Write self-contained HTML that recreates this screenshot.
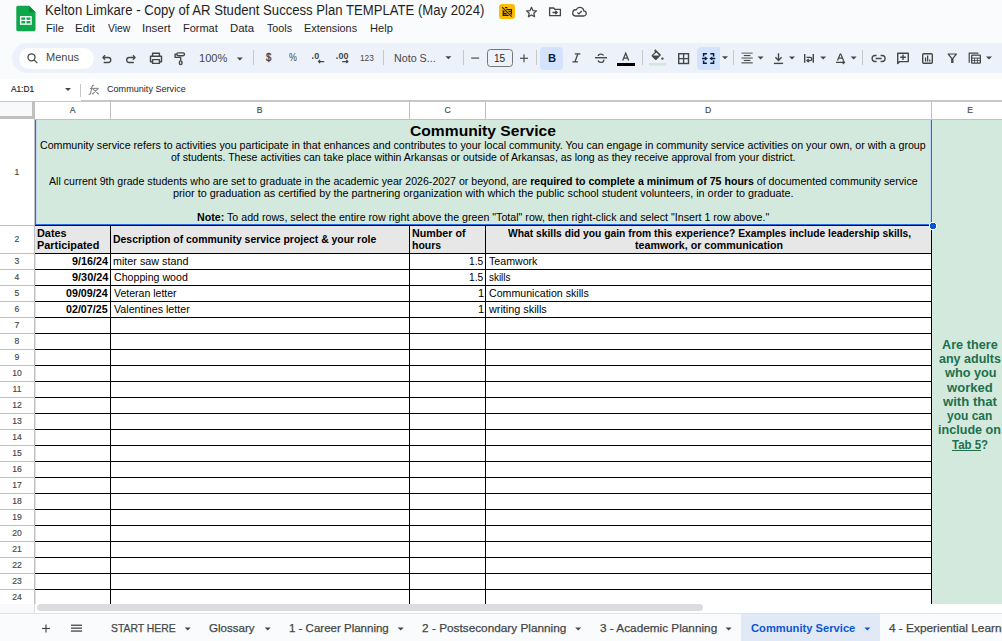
<!DOCTYPE html>
<html><head><meta charset="utf-8"><style>
html,body{margin:0;padding:0}
body{width:1002px;height:641px;overflow:hidden;position:relative;background:#f9fbfd;font-family:"Liberation Sans",sans-serif}
.t{position:absolute;white-space:nowrap;transform-origin:0 0}
.h{position:absolute;text-align:center;font-size:8.6px;line-height:8.6px;color:#444746;white-space:nowrap;-webkit-text-stroke:0.15px #444746}
svg{position:absolute;left:0;top:0}
</style></head><body>
<svg width="1002" height="641" viewBox="0 0 1002 641" shape-rendering="auto">
<rect x="12" y="43" width="1100" height="30" rx="15" fill="#edf2fa"/>
<rect x="19" y="48" width="75" height="21" rx="10.5" fill="#ffffff"/>
<g shape-rendering="crispEdges">
<rect x="0" y="79" width="1002" height="22" fill="#ffffff" />
<rect x="0" y="101" width="81" height="1" fill="#c7c7c7" />
<rect x="81" y="100" width="921" height="2" fill="#c7c7c7" />
<rect x="80" y="84" width="1" height="13" fill="#c7c7c7" />
<rect x="0" y="102" width="1002" height="17" fill="#ffffff" />
<rect x="0" y="102" width="32" height="14" fill="#f8f9fa" />
<rect x="32" y="102" width="3" height="17" fill="#c0c0c0" />
<rect x="0" y="116" width="35" height="3" fill="#c0c0c0" />
<rect x="35" y="119" width="967" height="1" fill="#c0c0c0" />
<rect x="110" y="102" width="1" height="17" fill="#c0c0c0" />
<rect x="409" y="102" width="1" height="17" fill="#c0c0c0" />
<rect x="485" y="102" width="1" height="17" fill="#c0c0c0" />
<rect x="931" y="102" width="1" height="17" fill="#c0c0c0" />
<rect x="0" y="119" width="34" height="485" fill="#ffffff" />
<rect x="34" y="119" width="1" height="485" fill="#c0c0c0" />
<rect x="0" y="225" width="34" height="1" fill="#c0c0c0" />
<rect x="0" y="253" width="34" height="1" fill="#c0c0c0" />
<rect x="0" y="269" width="34" height="1" fill="#c0c0c0" />
<rect x="0" y="285" width="34" height="1" fill="#c0c0c0" />
<rect x="0" y="301" width="34" height="1" fill="#c0c0c0" />
<rect x="0" y="317" width="34" height="1" fill="#c0c0c0" />
<rect x="0" y="333" width="34" height="1" fill="#c0c0c0" />
<rect x="0" y="349" width="34" height="1" fill="#c0c0c0" />
<rect x="0" y="365" width="34" height="1" fill="#c0c0c0" />
<rect x="0" y="381" width="34" height="1" fill="#c0c0c0" />
<rect x="0" y="397" width="34" height="1" fill="#c0c0c0" />
<rect x="0" y="413" width="34" height="1" fill="#c0c0c0" />
<rect x="0" y="429" width="34" height="1" fill="#c0c0c0" />
<rect x="0" y="445" width="34" height="1" fill="#c0c0c0" />
<rect x="0" y="461" width="34" height="1" fill="#c0c0c0" />
<rect x="0" y="477" width="34" height="1" fill="#c0c0c0" />
<rect x="0" y="493" width="34" height="1" fill="#c0c0c0" />
<rect x="0" y="509" width="34" height="1" fill="#c0c0c0" />
<rect x="0" y="525" width="34" height="1" fill="#c0c0c0" />
<rect x="0" y="541" width="34" height="1" fill="#c0c0c0" />
<rect x="0" y="557" width="34" height="1" fill="#c0c0c0" />
<rect x="0" y="573" width="34" height="1" fill="#c0c0c0" />
<rect x="0" y="589" width="34" height="1" fill="#c0c0c0" />
<rect x="35" y="120" width="967" height="484" fill="#ffffff" />
<rect x="35" y="120" width="896" height="105" fill="#d3e9de" />
<rect x="931" y="120" width="71" height="484" fill="#d3e9de" />
<rect x="35" y="226" width="896" height="27" fill="#e7e7e7" />
<rect x="35" y="226" width="1" height="378" fill="#e2e2e2" />
<rect x="35" y="225" width="897" height="1" fill="#000" />
<rect x="35" y="253" width="897" height="1" fill="#000" />
<rect x="35" y="269" width="897" height="1" fill="#000" />
<rect x="35" y="285" width="897" height="1" fill="#000" />
<rect x="35" y="301" width="897" height="1" fill="#000" />
<rect x="35" y="317" width="897" height="1" fill="#000" />
<rect x="35" y="333" width="897" height="1" fill="#000" />
<rect x="35" y="349" width="897" height="1" fill="#000" />
<rect x="35" y="365" width="897" height="1" fill="#000" />
<rect x="35" y="381" width="897" height="1" fill="#000" />
<rect x="35" y="397" width="897" height="1" fill="#000" />
<rect x="35" y="413" width="897" height="1" fill="#000" />
<rect x="35" y="429" width="897" height="1" fill="#000" />
<rect x="35" y="445" width="897" height="1" fill="#000" />
<rect x="35" y="461" width="897" height="1" fill="#000" />
<rect x="35" y="477" width="897" height="1" fill="#000" />
<rect x="35" y="493" width="897" height="1" fill="#000" />
<rect x="35" y="509" width="897" height="1" fill="#000" />
<rect x="35" y="525" width="897" height="1" fill="#000" />
<rect x="35" y="541" width="897" height="1" fill="#000" />
<rect x="35" y="557" width="897" height="1" fill="#000" />
<rect x="35" y="573" width="897" height="1" fill="#000" />
<rect x="35" y="589" width="897" height="1" fill="#000" />
<rect x="110" y="225" width="1" height="379" fill="#000" />
<rect x="409" y="225" width="1" height="379" fill="#000" />
<rect x="485" y="225" width="1" height="379" fill="#000" />
<rect x="931" y="225" width="1" height="379" fill="#000" />
<rect x="35" y="120" width="1" height="105" fill="#1a73e8" />
<rect x="36" y="120" width="1" height="104" fill="#b9d3f0" />
<rect x="931" y="120" width="1" height="105" fill="#1a73e8" />
<rect x="930" y="120" width="1" height="104" fill="#b9d3f0" />
<rect x="35" y="224" width="897" height="1" fill="#1a73e8" />
<circle cx="933" cy="226" r="4.3" fill="#fff"/><circle cx="933" cy="226" r="3.3" fill="#0b57d0"/>
<rect x="0" y="604" width="1002" height="9" fill="#ffffff" />
<rect x="0" y="604" width="35" height="9" fill="#f8f9fa" />
<rect x="34" y="604" width="1" height="9" fill="#e0e0e0" />
<rect x="0" y="613" width="1002" height="28" fill="#f9fbfd" />
<rect x="0" y="613" width="1002" height="1" fill="#e1e3e1" />
<rect x="741" y="614" width="139" height="27" fill="#e1e9f7" />
</g>
<rect x="37" y="604" width="666" height="7" rx="3.5" fill="#dadce0"/>
<g transform="translate(16.3,5.7) scale(0.96,0.98)"><path d="M1.6 0H13.2L20 6.8V24.4A1.6 1.6 0 0 1 18.4 26H1.6A1.6 1.6 0 0 1 0 24.4V1.6A1.6 1.6 0 0 1 1.6 0Z" fill="#0ea84b"/><path d="M13.2 0L20 6.8H14.8A1.6 1.6 0 0 1 13.2 5.2Z" fill="#078a39"/><rect x="3.8" y="10.6" width="12.3" height="8.9" fill="#fff"/><rect x="5.2" y="12" width="4.1" height="2.4" fill="#0ea84b"/><rect x="10.6" y="12" width="4.1" height="2.4" fill="#0ea84b"/><rect x="5.2" y="15.7" width="4.1" height="2.4" fill="#0ea84b"/><rect x="10.6" y="15.7" width="4.1" height="2.4" fill="#0ea84b"/></g>
<rect x="499" y="4" width="16" height="15" rx="3" fill="#fbbc04"/>
<g stroke="#1b1c20" stroke-width="1.15" fill="none"><path d="M503.2 9.6H511.5V15.4H503.2ZM503.2 11.6H511.5M503.2 13.6H511.5M505 7.6H507.4"/></g><path d="M502.1 7.2L511.7 16.6" stroke="#fbbc04" stroke-width="2.6"/><path d="M502.1 7.2L511.7 16.6" stroke="#1b1c20" stroke-width="1.15"/>
<path d="M531.5 7.3l1.45 3.25 3.55 .35-2.7 2.35.8 3.5-3.1-1.85-3.1 1.85.8-3.5-2.7-2.35 3.55-.35z" fill="none" stroke="#444746" stroke-width="1.2" stroke-linejoin="round"/>
<g fill="none" stroke="#444746" stroke-width="1.3"><path d="M549.6 8h4l1.2 1.3h5.6v6.4h-10.8z"/><path d="M552.5 12.5h4.5M555.3 10.8l1.8 1.7-1.8 1.7"/></g>
<g fill="none" stroke="#444746" stroke-width="1.3"><path d="M575.5 16h8a2.6 2.6 0 0 0 .3-5.2 4 4 0 0 0-7.6-1 3.1 3.1 0 0 0-.7 6.2z"/><path d="M577.3 12.4l1.6 1.5 2.9-2.9"/></g>
<g fill="none" stroke="#444746" stroke-width="1.3"><circle cx="31.5" cy="57.3" r="3.5"/><path d="M34.1 59.9l3.2 3.2"/></g>
<g fill="none" stroke="#444746" stroke-width="1.3" stroke-linejoin="round"><path d="M103 57.5h5.3a2.5 2.5 0 0 1 0 5h-4.6"/><path d="M105.1 55.3l-2.2 2.2 2.2 2.2"/></g>
<g fill="none" stroke="#444746" stroke-width="1.3" stroke-linejoin="round"><path d="M135 57.5h-5.8a2.5 2.5 0 0 0 0 5h4.6"/><path d="M132.9 55.3l2.2 2.2-2.2 2.2"/></g>
<g fill="none" stroke="#444746" stroke-width="1.4" stroke-linejoin="round"><path d="M152.6 56.3v-3h6.8v3"/><path d="M152.3 61.8h-1.8v-5.5h11v5.5h-1.8"/><rect x="152.6" y="59.6" width="6.8" height="3.8"/></g>
<g fill="none" stroke="#444746" stroke-width="1.4" stroke-linejoin="round"><rect x="176.8" y="52.9" width="7.7" height="2.8" rx="1.4"/><path d="M176.8 54.3h-1.7v3.1h5.6v3.1"/><rect x="179.4" y="60.9" width="2.6" height="3.7" rx="1.3"/></g>
<path d="M236.8 57.5 h6 l-3 3 z" fill="#444746"/>
<circle cx="312.8" cy="58.1" r="0.85" fill="#444746"/>
<text x="314.2" y="58.8" font-family="Liberation Sans" font-size="8.6" font-weight="700" fill="#444746" textLength="5" lengthAdjust="spacingAndGlyphs">0</text>
<g fill="none" stroke="#444746" stroke-width="1.2"><path d="M318.4 61.6h5.8M320.1 60l-1.6 1.6 1.6 1.6"/></g>
<circle cx="337" cy="58.1" r="0.85" fill="#444746"/>
<text x="338.4" y="58.8" font-family="Liberation Sans" font-size="8.6" font-weight="700" fill="#444746" textLength="10" lengthAdjust="spacingAndGlyphs">00</text>
<g fill="none" stroke="#444746" stroke-width="1.2"><path d="M342.2 61.6h5.8M346.3 60l1.6 1.6-1.6 1.6"/></g>
<path d="M445.4 56.2 h6 l-3 3 z" fill="#444746"/>
<rect x="471.2" y="57.5" width="8" height="1.15" fill="#444746"/>
<rect x="487.5" y="49.5" width="25" height="17" rx="3" fill="none" stroke="#747775" stroke-width="1"/>
<g fill="#444746"><rect x="520" y="57.7" width="8" height="1.15"/><rect x="523.42" y="54.3" width="1.15" height="8"/></g>
<rect x="253" y="50" width="1" height="15" fill="#c7c7c7" />
<rect x="383" y="50" width="1" height="15" fill="#c7c7c7" />
<rect x="463" y="50" width="1" height="15" fill="#c7c7c7" />
<rect x="536" y="50" width="1" height="15" fill="#c7c7c7" />
<rect x="642" y="50" width="1" height="15" fill="#c7c7c7" />
<rect x="733" y="50" width="1" height="15" fill="#c7c7c7" />
<rect x="862" y="50" width="1" height="15" fill="#c7c7c7" />
<rect x="540" y="47" width="23" height="23" rx="4" fill="#d3e3fd"/>
<path d="M701 47H720V70H701A4 4 0 0 1 697 66V51A4 4 0 0 1 701 47Z" fill="#d3e3fd"/>
<g fill="none" stroke="#444746" stroke-width="1.3"><path d="M574.8 53.8h5.6M572.4 61.8h5.6M577.9 53.8l-2.9 8"/></g>
<g fill="none" stroke="#444746" stroke-width="1.4"><path d="M595 57.7h12"/><path d="M603.6 55.5C603.1 54.6 602.1 54.1 600.9 54.1 599.3 54.1 598.3 54.9 598.3 56"/><path d="M603.8 59.6C603.9 61.4 602.6 62.4 600.9 62.4 599.4 62.4 598.4 61.7 598 60.6"/></g>
<path d="M622.7 60.6L625.7 53.2 628.7 60.6M623.8 58H627.6" fill="none" stroke="#444746" stroke-width="1.25"/>
<rect x="617" y="63" width="18" height="3" fill="#000" />
<g fill="#444746"><path d="M654.3 50.3l1-1 5.8 5.8-4.6 4.6a1 1 0 0 1-1.4 0l-3.2-3.2a1 1 0 0 1 0-1.4l2.9-2.9z M653 55.4h6.3l-2.9-2.9z" fill-rule="evenodd"/><circle cx="662.4" cy="58.6" r="1.2"/></g>
<rect x="649" y="63" width="17" height="2.6" fill="#cfe8d8" />
<g fill="none" stroke="#444746" stroke-width="1.4"><rect x="678.7" y="53.7" width="9.8" height="9.8"/><path d="M683.6 53.7v9.8M678.7 58.6h9.8"/></g>
<g fill="none" stroke="#041e49" stroke-width="1.5"><path d="M706.9 53.8H703.6V56.4M703.6 60.6V63.2H706.9M710.3 53.8H713.6V56.4M713.6 60.6V63.2H710.3"/><path d="M702 58.5H706.6M710.6 58.5H715.2"/></g>
<g fill="#041e49"><path d="M704.9 56.4L707.8 58.5 704.9 60.6z"/><path d="M712.3 56.4L709.4 58.5 712.3 60.6z"/></g>
<path d="M722.0 56.2 h6 l-3 3 z" fill="#444746"/>
<g fill="#444746"><rect x="741.5" y="52.6" width="11.2" height="1.1" opacity="0.8"/><rect x="743.8" y="55" width="6.6" height="1.1"/><rect x="741.5" y="57.4" width="11.2" height="1.3" opacity="0.75"/><rect x="743.8" y="59.9" width="6.6" height="1.1"/><rect x="741.5" y="62.3" width="11.2" height="1.1"/></g>
<path d="M757.6 56.6 h6 l-3 3 z" fill="#444746"/>
<g fill="none" stroke="#444746" stroke-width="1.4"><path d="M778.5 53.2v7M775.4 57.3l3.1 3.1 3.1-3.1"/><path d="M773.9 63.4h9.2"/></g>
<path d="M789.0 56.6 h6 l-3 3 z" fill="#444746"/>
<g fill="none" stroke="#444746" stroke-width="1.4"><path d="M804.7 53.9v8.8M813.3 53.9v8.8"/><path d="M806.5 57.4h3.7a1.6 1.6 0 0 1 0 3.2h-2.9M808.7 59l-1.6 1.6 1.6 1.6"/></g>
<path d="M820.2 56.6 h6 l-3 3 z" fill="#444746"/>
<path d="M836.8 60.4l3-7h1.4l3 7h-1.4l-.65-1.6h-3.3l-.65 1.6z M840.5 54.8l-1.1 2.8h2.2z" fill="#444746" fill-rule="evenodd"/>
<g fill="none" stroke="#444746" stroke-width="1.3"><path d="M836 62.3h8.5M842.8 60.6l1.7 1.7-1.7 1.7"/></g>
<path d="M850.6 56.6 h6 l-3 3 z" fill="#444746"/>
<g fill="none" stroke="#444746" stroke-width="1.3"><path d="M876.6 55.5h-1.5a3 3 0 0 0 0 6h1.5M880.6 55.5h1.5a3 3 0 0 1 0 6h-1.5M875.6 58.5h6"/></g>
<g fill="none" stroke="#444746" stroke-width="1.4" stroke-linejoin="round"><path d="M897.7 53.3h10.6v8.3h-8.6l-2 2z"/><path d="M903 54.5v5.6M900.2 57.3h5.6"/></g>
<g fill="none" stroke="#444746" stroke-width="1.4"><rect x="922.7" y="53.7" width="9.6" height="9.6" rx="1"/></g><g fill="#444746"><rect x="924.9" y="57.5" width="1.3" height="4"/><rect x="927" y="55.5" width="1.3" height="6"/><rect x="929.1" y="59.5" width="1.3" height="2"/></g>
<g fill="none" stroke="#444746" stroke-width="1.2" stroke-linejoin="round"><path d="M948.2 54h8.2l-3.5 4.3v4.2h-1.2v-4.2z"/></g>
<path d="M969.2 62.8V53.2H978.4" fill="none" stroke="#444746" stroke-width="1.2"/>
<rect x="971" y="54.6" width="10" height="9.2" rx="1.2" fill="#444746"/>
<g fill="#edf2fa"><rect x="972.3" y="55.8" width="7.4" height="1.8"/><rect x="972.3" y="58.6" width="1.9" height="1.6"/><rect x="975.05" y="58.6" width="1.9" height="1.6"/><rect x="977.8" y="58.6" width="1.9" height="1.6"/><rect x="972.3" y="61" width="1.9" height="1.5"/><rect x="975.05" y="61" width="1.9" height="1.5"/><rect x="977.8" y="61" width="1.9" height="1.5"/></g>
<path d="M986.0 56.6 h6 l-3 3 z" fill="#444746"/>
<path d="M65.0 88.0 h6 l-3 3 z" fill="#444746"/>
<g fill="none" stroke="#80868b" stroke-width="1.05"><path d="M88.6 94.3C89.8 94.6 90.5 93.9 90.8 92.4L91.9 86.9C92.2 85.5 92.9 85.1 94.2 85.4"/><path d="M89.8 88.4H98.8"/><path d="M92.6 88.6L98.4 93.8M98.2 88.6L92.6 93.8M91.8 93.8H93.6M97.2 93.8H99"/></g>
<g fill="#444746"><rect x="42" y="627.9" width="8" height="1.15"/><rect x="45.42" y="624.5" width="1.15" height="8"/></g>
<g fill="#444746"><rect x="71" y="624.6" width="11" height="1.3"/><rect x="71" y="627.5" width="11" height="1.3"/><rect x="71" y="630.4" width="11" height="1.3"/></g>
<path d="M184.7 627.5 h6 l-3 3 z" fill="#444746"/>
<path d="M264.7 627.5 h6 l-3 3 z" fill="#444746"/>
<path d="M397.7 627.5 h6 l-3 3 z" fill="#444746"/>
<path d="M575.2 627.5 h6 l-3 3 z" fill="#444746"/>
<path d="M725.6 627.5 h6 l-3 3 z" fill="#444746"/>
<path d="M864.4 627.5 h6 l-3 3 z" fill="#0b57d0"/>
</svg>
<div class="h" style="left:72.5px;top:106.2px;width:20px;margin-left:-10px">A</div>
<div class="h" style="left:259.5px;top:106.2px;width:20px;margin-left:-10px">B</div>
<div class="h" style="left:447.5px;top:106.2px;width:20px;margin-left:-10px">C</div>
<div class="h" style="left:708.0px;top:106.2px;width:20px;margin-left:-10px">D</div>
<div class="h" style="left:970.0px;top:106.2px;width:20px;margin-left:-10px">E</div>
<div class="h" style="left:0px;top:168.3px;width:34px">1</div>
<div class="h" style="left:0px;top:234.8px;width:34px">2</div>
<div class="h" style="left:0px;top:256.8px;width:34px">3</div>
<div class="h" style="left:0px;top:272.8px;width:34px">4</div>
<div class="h" style="left:0px;top:288.8px;width:34px">5</div>
<div class="h" style="left:0px;top:304.8px;width:34px">6</div>
<div class="h" style="left:0px;top:320.8px;width:34px">7</div>
<div class="h" style="left:0px;top:336.8px;width:34px">8</div>
<div class="h" style="left:0px;top:352.8px;width:34px">9</div>
<div class="h" style="left:0px;top:368.8px;width:34px">10</div>
<div class="h" style="left:0px;top:384.8px;width:34px">11</div>
<div class="h" style="left:0px;top:400.8px;width:34px">12</div>
<div class="h" style="left:0px;top:416.8px;width:34px">13</div>
<div class="h" style="left:0px;top:432.8px;width:34px">14</div>
<div class="h" style="left:0px;top:448.8px;width:34px">15</div>
<div class="h" style="left:0px;top:464.8px;width:34px">16</div>
<div class="h" style="left:0px;top:480.8px;width:34px">17</div>
<div class="h" style="left:0px;top:496.8px;width:34px">18</div>
<div class="h" style="left:0px;top:512.8px;width:34px">19</div>
<div class="h" style="left:0px;top:528.8px;width:34px">20</div>
<div class="h" style="left:0px;top:544.8px;width:34px">21</div>
<div class="h" style="left:0px;top:560.8px;width:34px">22</div>
<div class="h" style="left:0px;top:576.8px;width:34px">23</div>
<div class="h" style="left:0px;top:592.8px;width:34px">24</div>
<div class="t" style="left:45.26px;top:3.15px;font-size:14.0px;line-height:14.0px;font-weight:400;color:#1f1f1f;transform:scaleX(0.9373);">Kelton Limkare - Copy of AR Student Success Plan TEMPLATE (May 2024)</div>
<div class="t" style="left:46.04px;top:22.18px;font-size:11.6px;line-height:11.6px;font-weight:400;color:#1f1f1f;transform:scaleX(0.9647);">File</div>
<div class="t" style="left:75.00px;top:22.18px;font-size:11.6px;line-height:11.6px;font-weight:400;color:#1f1f1f;transform:scaleX(1.0000);">Edit</div>
<div class="t" style="left:108.00px;top:22.18px;font-size:11.6px;line-height:11.6px;font-weight:400;color:#1f1f1f;transform:scaleX(0.8960);">View</div>
<div class="t" style="left:142.21px;top:22.18px;font-size:11.6px;line-height:11.6px;font-weight:400;color:#1f1f1f;transform:scaleX(0.9929);">Insert</div>
<div class="t" style="left:183.46px;top:22.18px;font-size:11.6px;line-height:11.6px;font-weight:400;color:#1f1f1f;transform:scaleX(0.9444);">Format</div>
<div class="t" style="left:230.42px;top:22.18px;font-size:11.6px;line-height:11.6px;font-weight:400;color:#1f1f1f;transform:scaleX(0.9826);">Data</div>
<div class="t" style="left:267.00px;top:22.18px;font-size:11.6px;line-height:11.6px;font-weight:400;color:#1f1f1f;transform:scaleX(0.9259);">Tools</div>
<div class="t" style="left:304.06px;top:22.18px;font-size:11.6px;line-height:11.6px;font-weight:400;color:#1f1f1f;transform:scaleX(0.9357);">Extensions</div>
<div class="t" style="left:369.64px;top:22.18px;font-size:11.6px;line-height:11.6px;font-weight:400;color:#1f1f1f;transform:scaleX(0.9565);">Help</div>
<div class="t" style="left:45.52px;top:51.52px;font-size:11.2px;line-height:11.2px;font-weight:400;color:#444746;transform:scaleX(0.9844);">Menus</div>
<div class="t" style="left:198.59px;top:53.49px;font-size:11.0px;line-height:11.0px;font-weight:400;color:#444746;transform:scaleX(1.0074);">100%</div>
<div class="t" style="left:265.80px;top:52.23px;font-size:10.6px;line-height:10.6px;font-weight:400;color:#444746;transform:scaleX(0.9000);-webkit-text-stroke:0.4px #444746">$</div>
<div class="t" style="left:289.20px;top:52.53px;font-size:10.0px;line-height:10.0px;font-weight:400;color:#444746;transform:scaleX(0.8889);">%</div>
<div class="t" style="left:359.94px;top:52.77px;font-size:9.6px;line-height:9.6px;font-weight:400;color:#444746;transform:scaleX(0.8600);">123</div>
<div class="t" style="left:394.49px;top:53.11px;font-size:11.8px;line-height:11.8px;font-weight:400;color:#444746;transform:scaleX(0.9068);">Noto S...</div>
<div class="t" style="left:494.00px;top:52.52px;font-size:11.2px;line-height:11.2px;font-weight:400;color:#1f1f1f;transform:scaleX(0.9000);">15</div>
<div class="t" style="left:547.63px;top:52.87px;font-size:11.5px;line-height:11.5px;font-weight:700;color:#041e49;transform:scaleX(0.9714);">B</div>
<div class="t" style="left:11.00px;top:85.21px;font-size:9.2px;line-height:9.2px;font-weight:400;color:#1f1f1f;transform:scaleX(0.9000);-webkit-text-stroke:0.2px #1f1f1f">A1:D1</div>
<div class="t" style="left:107.00px;top:83.87px;font-size:9.6px;line-height:9.6px;font-weight:400;color:#1f1f1f;transform:scaleX(0.9470);">Community Service</div>
<div class="t" style="left:410.08px;top:123.16px;font-size:15.4px;line-height:15.4px;font-weight:700;color:#000;transform:scaleX(1.0155);">Community Service</div>
<div class="t" style="left:40.00px;top:140.85px;font-size:10.1px;line-height:10.1px;font-weight:400;color:#000;transform:scaleX(1.0555);">Community service refers to activities you participate in that enhances and contributes to your local community. You can engage in community service activities on your own, or with a group</div>
<div class="t" style="left:171.00px;top:152.65px;font-size:10.1px;line-height:10.1px;font-weight:400;color:#000;transform:scaleX(1.0435);">of students. These activities can take place within Arkansas or outside of Arkansas, as long as they receive approval from your district.</div>
<div class="t" style="left:49.00px;top:176.65px;font-size:10.1px;line-height:10.1px;font-weight:400;color:#000;transform:scaleX(1.0496);">All current 9th grade students who are set to graduate in the academic year 2026-2027 or beyond, are <b>required to complete a minimum of 75 hours</b> of documented community service</div>
<div class="t" style="left:172.93px;top:188.65px;font-size:10.1px;line-height:10.1px;font-weight:400;color:#000;transform:scaleX(1.0718);">prior to graduation as certified by the partnering organization with which the public school student volunteers, in order to graduate.</div>
<div class="t" style="left:196.94px;top:212.65px;font-size:10.1px;line-height:10.1px;font-weight:400;color:#000;transform:scaleX(1.0555);"><b>Note:</b> To add rows, select the entire row right above the green "Total" row, then right-click and select "Insert 1 row above."</div>
<div class="t" style="left:36.52px;top:229.45px;font-size:10.1px;line-height:10.1px;font-weight:700;color:#000;transform:scaleX(1.0769);">Dates</div>
<div class="t" style="left:36.52px;top:241.45px;font-size:10.1px;line-height:10.1px;font-weight:700;color:#000;transform:scaleX(1.0786);">Participated</div>
<div class="t" style="left:112.97px;top:235.45px;font-size:10.1px;line-height:10.1px;font-weight:700;color:#000;transform:scaleX(1.0336);">Description of community service project &amp; your role</div>
<div class="t" style="left:411.94px;top:229.45px;font-size:10.1px;line-height:10.1px;font-weight:700;color:#000;transform:scaleX(1.0600);">Number of</div>
<div class="t" style="left:411.96px;top:241.45px;font-size:10.1px;line-height:10.1px;font-weight:700;color:#000;transform:scaleX(1.0370);">hours</div>
<div class="t" style="left:507.50px;top:229.45px;font-size:10.1px;line-height:10.1px;font-weight:700;color:#000;transform:scaleX(1.0208);">What skills did you gain from this experience? Examples include leadership skills,</div>
<div class="t" style="left:634.70px;top:241.25px;font-size:10.1px;line-height:10.1px;font-weight:700;color:#000;transform:scaleX(1.0557);">teamwork, or communication</div>
<div class="t" style="left:72.00px;top:257.37px;font-size:10.2px;line-height:10.2px;font-weight:700;color:#000;transform:scaleX(1.0588);">9/16/24</div>
<div class="t" style="left:112.94px;top:257.37px;font-size:10.2px;line-height:10.2px;font-weight:400;color:#000;transform:scaleX(1.0571);">miter saw stand</div>
<div class="t" style="left:469.00px;top:257.37px;font-size:10.2px;line-height:10.2px;font-weight:400;color:#000;transform:scaleX(1.0000);">1.5</div>
<div class="t" style="left:489.00px;top:257.37px;font-size:10.2px;line-height:10.2px;font-weight:400;color:#000;transform:scaleX(1.0435);">Teamwork</div>
<div class="t" style="left:71.60px;top:273.37px;font-size:10.2px;line-height:10.2px;font-weight:700;color:#000;transform:scaleX(1.0706);">9/30/24</div>
<div class="t" style="left:114.00px;top:273.37px;font-size:10.2px;line-height:10.2px;font-weight:400;color:#000;transform:scaleX(1.0429);">Chopping wood</div>
<div class="t" style="left:469.00px;top:273.37px;font-size:10.2px;line-height:10.2px;font-weight:400;color:#000;transform:scaleX(1.0000);">1.5</div>
<div class="t" style="left:489.00px;top:273.37px;font-size:10.2px;line-height:10.2px;font-weight:400;color:#000;transform:scaleX(0.9727);">skills</div>
<div class="t" style="left:66.00px;top:289.37px;font-size:10.2px;line-height:10.2px;font-weight:700;color:#000;transform:scaleX(1.0500);">09/09/24</div>
<div class="t" style="left:114.00px;top:289.37px;font-size:10.2px;line-height:10.2px;font-weight:400;color:#000;transform:scaleX(1.0328);">Veteran letter</div>
<div class="t" style="left:477.50px;top:289.37px;font-size:10.2px;line-height:10.2px;font-weight:400;color:#000;transform:scaleX(1.1000);">1</div>
<div class="t" style="left:489.00px;top:289.37px;font-size:10.2px;line-height:10.2px;font-weight:400;color:#000;transform:scaleX(1.0421);">Communication skills</div>
<div class="t" style="left:66.00px;top:305.37px;font-size:10.2px;line-height:10.2px;font-weight:700;color:#000;transform:scaleX(1.0500);">02/07/25</div>
<div class="t" style="left:114.00px;top:305.37px;font-size:10.2px;line-height:10.2px;font-weight:400;color:#000;transform:scaleX(1.0472);">Valentines letter</div>
<div class="t" style="left:477.50px;top:305.37px;font-size:10.2px;line-height:10.2px;font-weight:400;color:#000;transform:scaleX(1.1000);">1</div>
<div class="t" style="left:489.00px;top:305.37px;font-size:10.2px;line-height:10.2px;font-weight:400;color:#000;transform:scaleX(1.0630);">writing skills</div>
<div class="t" style="left:941.80px;top:338.96px;font-size:12.8px;line-height:12.8px;font-weight:700;color:#21704b;transform:scaleX(0.9911);">Are there</div>
<div class="t" style="left:939.00px;top:352.96px;font-size:12.8px;line-height:12.8px;font-weight:700;color:#21704b;transform:scaleX(0.9778);">any adults</div>
<div class="t" style="left:944.60px;top:366.96px;font-size:12.8px;line-height:12.8px;font-weight:700;color:#21704b;transform:scaleX(0.9941);">who you</div>
<div class="t" style="left:947.00px;top:381.96px;font-size:12.8px;line-height:12.8px;font-weight:700;color:#21704b;transform:scaleX(1.0205);">worked</div>
<div class="t" style="left:942.60px;top:395.96px;font-size:12.8px;line-height:12.8px;font-weight:700;color:#21704b;transform:scaleX(1.0264);">with that</div>
<div class="t" style="left:947.00px;top:409.96px;font-size:12.8px;line-height:12.8px;font-weight:700;color:#21704b;transform:scaleX(0.9375);">you can</div>
<div class="t" style="left:938.02px;top:423.96px;font-size:12.8px;line-height:12.8px;font-weight:700;color:#21704b;transform:scaleX(0.9839);">include on</div>
<div class="t" style="left:952.00px;top:438.96px;font-size:12.8px;line-height:12.8px;font-weight:700;color:#21704b;transform:scaleX(0.8950);"><span style="text-decoration:underline;text-underline-offset:1px">Tab 5</span>?</div>
<div class="t" style="left:110.52px;top:623.01px;font-size:11.8px;line-height:11.8px;font-weight:400;color:#444746;transform:scaleX(0.8819);-webkit-text-stroke:0.25px #444746">START HERE</div>
<div class="t" style="left:208.92px;top:623.01px;font-size:11.8px;line-height:11.8px;font-weight:400;color:#444746;transform:scaleX(0.9804);-webkit-text-stroke:0.25px #444746">Glossary</div>
<div class="t" style="left:288.52px;top:623.01px;font-size:11.8px;line-height:11.8px;font-weight:400;color:#444746;transform:scaleX(0.9752);-webkit-text-stroke:0.25px #444746">1 - Career Planning</div>
<div class="t" style="left:422.10px;top:623.01px;font-size:11.8px;line-height:11.8px;font-weight:400;color:#444746;transform:scaleX(1.0000);-webkit-text-stroke:0.25px #444746">2 - Postsecondary Planning</div>
<div class="t" style="left:599.80px;top:623.01px;font-size:11.8px;line-height:11.8px;font-weight:400;color:#444746;transform:scaleX(0.9983);-webkit-text-stroke:0.25px #444746">3 - Academic Planning</div>
<div class="t" style="left:751.10px;top:623.01px;font-size:11.8px;line-height:11.8px;font-weight:700;color:#0b57d0;transform:scaleX(0.9473);">Community Service</div>
<div class="t" style="left:889.10px;top:623.01px;font-size:11.8px;line-height:11.8px;font-weight:400;color:#444746;transform:scaleX(1.0036);-webkit-text-stroke:0.25px #444746">4 - Experiential Learning</div>
</body></html>
